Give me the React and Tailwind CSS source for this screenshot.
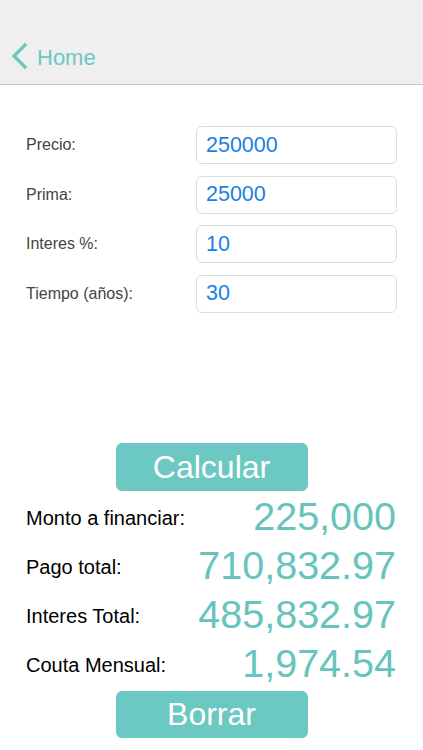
import React from "react";

const fields = [
  { label: "Precio:", value: "250000" },
  { label: "Prima:", value: "25000" },
  { label: "Interes %:", value: "10" },
  { label: "Tiempo (años):", value: "30" },
];

const results = [
  { label: "Monto a financiar:", value: "225,000" },
  { label: "Pago total:", value: "710,832.97" },
  { label: "Interes Total:", value: "485,832.97" },
  { label: "Couta Mensual:", value: "1,974.54" },
];

export default function App() {
  return (
    <div className="flex h-[750px] w-[423px] flex-col overflow-hidden bg-white font-['Liberation_Sans',Arial,sans-serif]">
      <header className="flex h-[85px] items-end border-b border-[#c8c8c8] bg-[#efefef] pb-[15px]">
        <div className="flex items-center gap-[9px] pl-[11px] text-[#6cc8c2]">
          <svg width="17" height="26" viewBox="0 0 17 26" fill="none">
            <path d="M14 2 L3 13 L14 24" stroke="#6cc8c2" strokeWidth="3.4" strokeLinecap="square" />
          </svg>
          <span className="pt-[3px] text-[22px] leading-none">Home</span>
        </div>
      </header>

      <div className="flex flex-col gap-[11.5px] pt-[41px]">
        {fields.map((f) => (
          <div key={f.label} className="flex h-[38px] items-center">
            <span className="w-[196px] pl-[26px] text-[16px] text-[#444]">{f.label}</span>
            <div className="flex h-[38px] w-[201px] items-center rounded-[6px] border border-[#dcdcdc] pl-[9px] text-[21.5px] text-[#1b7fe3]">
              {f.value}
            </div>
          </div>
        ))}
      </div>

      <div className="flex justify-center pt-[130px]">
        <button className="h-[48px] w-[192px] rounded-[6px] bg-[#6cc8c3] text-[32px] leading-none text-white">
          Calcular
        </button>
      </div>

      <div className="flex flex-col pt-[2px]">
        {results.map((r) => (
          <div key={r.label} className="flex h-[49px] items-center justify-between pl-[26px] pr-[27px]">
            <span className="pt-[2px] text-[20px] text-black">{r.label}</span>
            <span className="text-[39.5px] font-light leading-none text-[#66c4bd]">{r.value}</span>
          </div>
        ))}
      </div>

      <div className="flex justify-center pt-[2px]">
        <button className="h-[47px] w-[192px] rounded-[6px] bg-[#6cc8c3] text-[32px] leading-none text-white">
          Borrar
        </button>
      </div>
    </div>
  );
}
